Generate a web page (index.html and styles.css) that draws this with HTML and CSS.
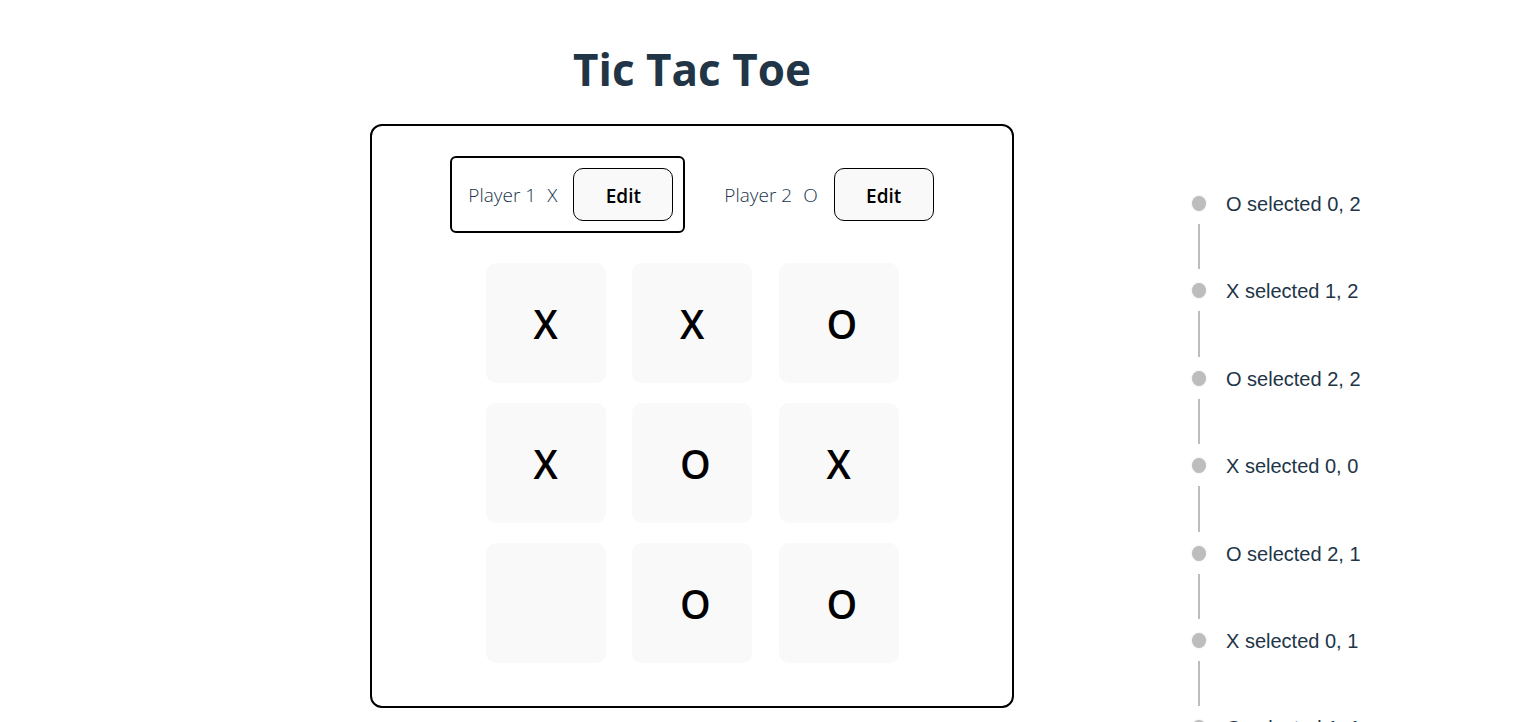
FILE: index.html
```html
<!DOCTYPE html>
<html lang="en">
<head>
<meta charset="utf-8">
<title>Tic Tac Toe</title>
<link rel="stylesheet" href="styles.css">
</head>
<body>
<div class="page">
  <main class="game">
    <h1 class="title">Tic Tac Toe</h1>
    <section class="panel">
      <ol class="players">
        <li class="player active"><span class="name">Player 1</span><span class="symbol">X</span><button class="edit" type="button">Edit</button></li>
        <li class="player"><span class="name">Player 2</span><span class="symbol">O</span><button class="edit" type="button">Edit</button></li>
      </ol>
      <div class="board">
        <button class="cell" type="button">X</button>
        <button class="cell" type="button">X</button>
        <button class="cell" type="button">O</button>
        <button class="cell" type="button">X</button>
        <button class="cell" type="button">O</button>
        <button class="cell" type="button">X</button>
        <button class="cell" type="button" aria-label="Empty"></button>
        <button class="cell" type="button">O</button>
        <button class="cell" type="button">O</button>
      </div>
    </section>
  </main>
  <aside class="log">
    <ol class="timeline">
      <li class="turn"><span class="track"><span class="dot"></span><span class="line"></span></span><span class="label">O selected 0, 2</span></li>
      <li class="turn"><span class="track"><span class="dot"></span><span class="line"></span></span><span class="label">X selected 1, 2</span></li>
      <li class="turn"><span class="track"><span class="dot"></span><span class="line"></span></span><span class="label">O selected 2, 2</span></li>
      <li class="turn"><span class="track"><span class="dot"></span><span class="line"></span></span><span class="label">X selected 0, 0</span></li>
      <li class="turn"><span class="track"><span class="dot"></span><span class="line"></span></span><span class="label">O selected 2, 1</span></li>
      <li class="turn"><span class="track"><span class="dot"></span><span class="line"></span></span><span class="label">X selected 0, 1</span></li>
      <li class="turn"><span class="track"><span class="dot"></span><span class="line"></span></span><span class="label">O selected 1, 1</span></li>
      <li class="turn"><span class="track"><span class="dot"></span><span class="line"></span></span><span class="label">X selected 1, 0</span></li>
    </ol>
  </aside>
</div>
</body>
</html>
```

FILE: styles.css
```css
* { box-sizing: border-box; }
html { scrollbar-width: none; }
body {
  margin: 0;
  background: #fff;
  color: #213547;
  font-family: "Open Sans", "Noto Sans", sans-serif;
}
ol { list-style: none; margin: 0; padding: 0; }
.page {
  display: grid;
  grid-template-columns: 370fr minmax(0, 644px) 524fr;
}
.game { grid-column: 2; padding-top: 40px; }
.title {
  margin: 0 0 26px;
  font-size: 44px;
  line-height: 58px;
  font-weight: 700;
  text-align: center;
}
.panel {
  padding: 30px 20px 43px;
  border: 2px solid #000;
  border-radius: 12px;
}
.players {
  display: flex;
  justify-content: center;
  align-items: center;
  gap: 33px;
  font-size: 19px;
  line-height: 24px;
  font-weight: 350;
}
.player { display: flex; align-items: center; padding-left: 6px; }
.active { padding: 10px 10px 10px 16px; border: 2px solid #000; border-radius: 6px; }
.symbol { margin: 0 16px 0 11px; }
.edit {
  width: 100px;
  height: 53px;
  padding: 2px 0 0;
  border: 1px solid #000;
  border-radius: 10px;
  background: #f9f9f9;
  color: #000;
  font: 600 19px/24px "Open Sans", "Noto Sans", sans-serif;
}
.board {
  display: grid;
  grid-template-columns: repeat(3, 120px);
  justify-content: space-between;
  row-gap: 20px;
  width: 413px;
  max-width: 100%;
  margin: 30px auto 0;
}
.cell {
  height: 120px;
  padding: 2px 48px 0;
  border: 0;
  border-radius: 10px;
  background: #f9f9f9;
  color: #000;
  font: 550 39px/48px "Open Sans", "Noto Sans", sans-serif;
}
.log { padding: 182px 0 0 178px; height: 100vh; overflow: hidden; }
.timeline {
  display: grid;
  grid-template-rows: repeat(8, 1fr);
  height: 699px;
}
.turn { display: flex; gap: 20px; }
.track { display: flex; flex-direction: column; align-items: center; }
.dot {
  width: 14px;
  height: 15px;
  margin: 14px 0 13px;
  border-radius: 50%;
  background: #bdbdbd;
  box-shadow: 0 0 2px rgba(0, 0, 0, 0.15);
}
.line { flex: 1; width: 2px; background: #bdbdbd; }
.label {
  padding-top: 10px;
  font: 400 20px/24px "Liberation Sans", Arial, sans-serif;
}
```
